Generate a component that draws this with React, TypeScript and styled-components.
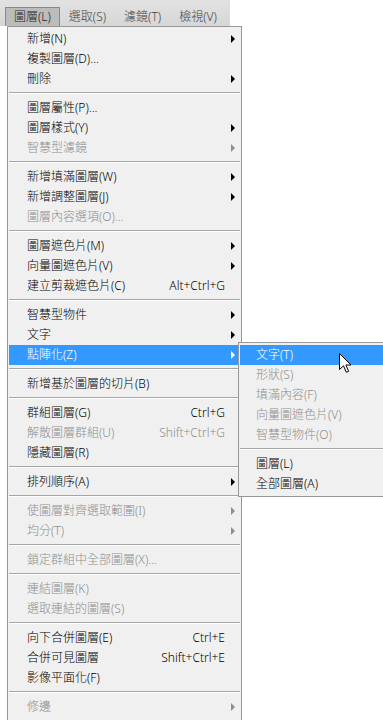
import * as React from 'react';
import styled, { createGlobalStyle } from 'styled-components';

const GlobalStyle = createGlobalStyle`
  html, body {
    margin: 0;
    padding: 0;
    background: #fff;
    overflow: hidden;
  }
  body {
    font-family: "Noto Sans", "Noto Sans CJK TC", sans-serif;
    font-size: 12px;
    font-weight: 300;
    color: #000;
  }
`;

const Page = styled.div`
  width: 383px;
  height: 720px;
  display: flex;
  flex-direction: column;
  position: relative;
`;

const MenuBar = styled.div`
  flex-shrink: 0;
  width: 225px;
  height: 26px;
  padding-left: 5px;
  display: flex;
  align-items: flex-end;
  background: linear-gradient(#e2e2e2, #d6d6d6);
`;

const MenuTitle = styled.div<{ open?: boolean }>`
  height: 18px;
  line-height: 17px;
  padding: 0 8px;
  border: 1px solid ${(p) => (p.open ? '#8a8a8a' : 'transparent')};
  border-bottom: none;
  background: ${(p) => (p.open ? '#bcbcbc' : 'transparent')};
  color: ${(p) => (p.open ? '#222' : '#444')};
  white-space: nowrap;
`;

const Menu = styled.div`
  width: 233px;
  margin-left: 7px;
  padding-top: 2px;
  background: #f0f0f0;
  border: 1px solid #979797;
  border-bottom: none;
  flex: 1;
  display: flex;
  flex-direction: column;
`;

const Item = styled.div<{ disabled?: boolean; active?: boolean; indent?: number }>`
  position: relative;
  flex-shrink: 0;
  height: 20px;
  line-height: 20px;
  margin: 0 1px;
  padding-left: ${(p) => p.indent ?? 18}px;
  display: flex;
  align-items: center;
  white-space: nowrap;
  background: ${(p) => (p.active ? '#3399ff' : 'transparent')};
  color: ${(p) => (p.active ? '#fff' : p.disabled ? '#8e8e8e' : '#000')};
`;

const Label = styled.span`
  flex: 1;
`;

const Shortcut = styled.span`
  padding-right: 1px;
`;

const ArrowCell = styled.span<{ show?: boolean; disabled?: boolean; active?: boolean }>`
  width: 14px;
  height: 20px;
  display: flex;
  align-items: center;
  justify-content: center;
  &::after {
    content: '';
    display: ${(p) => (p.show ? 'block' : 'none')};
    border-left: 4px solid
      ${(p) => (p.active ? '#fff' : p.disabled ? '#8e8e8e' : '#000')};
    border-top: 4px solid transparent;
    border-bottom: 4px solid transparent;
  }
`;

const Separator = styled.div`
  flex-shrink: 0;
  height: 1px;
  margin: 3px 1px 4px 1px;
  background: #a6a6a6;
  border-bottom: 1px solid #fff;
`;

const SubMenu = styled.div`
  position: absolute;
  left: 229px;
  top: -3px;
  width: 170px;
  padding: 2px 0;
  background: #f0f0f0;
  border: 1px solid #979797;
  display: flex;
  flex-direction: column;
  z-index: 2;
`;

const Cursor = styled.svg`
  position: absolute;
  left: 99px;
  top: 8px;
`;

type Entry =
  | { sep: true }
  | {
      sep?: false;
      label: string;
      shortcut?: string;
      sub?: boolean;
      disabled?: boolean;
      active?: boolean;
    };

const entries: Entry[] = [
  { label: '新增(N)', sub: true },
  { label: '複製圖層(D)...' },
  { label: '刪除', sub: true },
  { sep: true },
  { label: '圖層屬性(P)...' },
  { label: '圖層樣式(Y)', sub: true },
  { label: '智慧型濾鏡', sub: true, disabled: true },
  { sep: true },
  { label: '新增填滿圖層(W)', sub: true },
  { label: '新增調整圖層(J)', sub: true },
  { label: '圖層內容選項(O)...', disabled: true },
  { sep: true },
  { label: '圖層遮色片(M)', sub: true },
  { label: '向量圖遮色片(V)', sub: true },
  { label: '建立剪裁遮色片(C)', shortcut: 'Alt+Ctrl+G' },
  { sep: true },
  { label: '智慧型物件', sub: true },
  { label: '文字', sub: true },
  { label: '點陣化(Z)', sub: true, active: true },
  { sep: true },
  { label: '新增基於圖層的切片(B)' },
  { sep: true },
  { label: '群組圖層(G)', shortcut: 'Ctrl+G' },
  { label: '解散圖層群組(U)', shortcut: 'Shift+Ctrl+G', disabled: true },
  { label: '隱藏圖層(R)' },
  { sep: true },
  { label: '排列順序(A)', sub: true },
  { sep: true },
  { label: '使圖層對齊選取範圍(I)', sub: true, disabled: true },
  { label: '均分(T)', sub: true, disabled: true },
  { sep: true },
  { label: '鎖定群組中全部圖層(X)...', disabled: true },
  { sep: true },
  { label: '連結圖層(K)', disabled: true },
  { label: '選取連結的圖層(S)', disabled: true },
  { sep: true },
  { label: '向下合併圖層(E)', shortcut: 'Ctrl+E' },
  { label: '合併可見圖層', shortcut: 'Shift+Ctrl+E' },
  { label: '影像平面化(F)' },
  { sep: true },
  { label: '修邊', sub: true, disabled: true },
];

const subEntries: Entry[] = [
  { label: '文字(T)', active: true },
  { label: '形狀(S)', disabled: true },
  { label: '填滿內容(F)', disabled: true },
  { label: '向量圖遮色片(V)', disabled: true },
  { label: '智慧型物件(O)', disabled: true },
  { sep: true },
  { label: '圖層(L)' },
  { label: '全部圖層(A)' },
];

const RasterizeMenu = () => (
  <SubMenu>
    {subEntries.map((e, i) =>
      e.sep ? (
        <Separator key={i} />
      ) : (
        <Item key={i} indent={16} disabled={e.disabled} active={e.active}>
          <Label>{e.label}</Label>
          {e.active && (
            <Cursor width="13" height="21" viewBox="0 0 13 21">
              <path
                d="M0.5 0.5 L0.5 16.5 L4.5 12.8 L7.3 19.3 L9.6 18.3 L6.9 12 L12 12 Z"
                fill="#fff"
                stroke="#000"
                strokeWidth="1"
                strokeLinejoin="round"
              />
            </Cursor>
          )}
        </Item>
      )
    )}
  </SubMenu>
);

export default function App() {
  return (
    <Page>
      <GlobalStyle />
      <MenuBar>
        <MenuTitle open>圖層(L)</MenuTitle>
        <MenuTitle>選取(S)</MenuTitle>
        <MenuTitle>濾鏡(T)</MenuTitle>
        <MenuTitle>檢視(V)</MenuTitle>
      </MenuBar>
      <Menu>
        {entries.map((e, i) =>
          e.sep ? (
            <Separator key={i} />
          ) : (
            <Item key={i} disabled={e.disabled} active={e.active}>
              <Label>{e.label}</Label>
              {e.shortcut && <Shortcut>{e.shortcut}</Shortcut>}
              <ArrowCell show={e.sub} disabled={e.disabled} active={e.active} />
              {e.active && <RasterizeMenu />}
            </Item>
          )
        )}
      </Menu>
    </Page>
  );
}
